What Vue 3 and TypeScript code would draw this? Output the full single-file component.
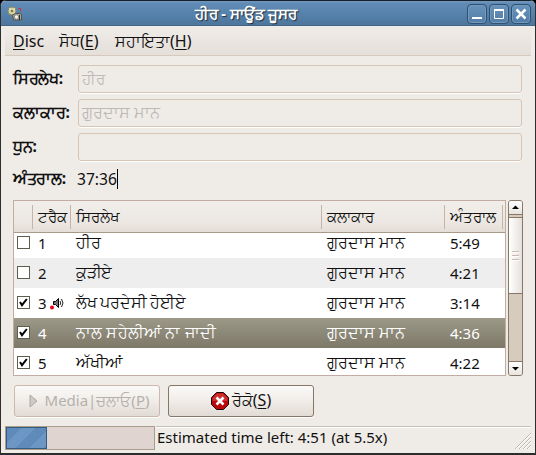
<script setup lang="ts">
import { ref } from 'vue'

interface Track {
  number: number
  title: string
  artist: string
  duration: string
  checked: boolean
  playing?: boolean
  tracking: number
}

const artist = 'ਗੁਰਦਾਸ ਮਾਨ'
const selected = ref(4)
const progress = ref(28)
const tracks = ref<Track[]>([
  { number: 1, title: 'ਹੀਰ', artist, duration: '5:49', checked: false, tracking: -0.2 },
  { number: 2, title: 'ਕੁੜੀਏ', artist, duration: '4:21', checked: false, tracking: -0.3 },
  { number: 3, title: 'ਲੱਖ ਪਰਦੇਸੀ ਹੋਈਏ', artist, duration: '3:14', checked: true, playing: true, tracking: -0.25 },
  { number: 4, title: 'ਨਾਲ ਸਹੇਲੀਆਂ ਨਾ ਜਾਦੀ', artist, duration: '4:36', checked: true, tracking: 0.15 },
  { number: 5, title: 'ਅੱਖੀਆਂ', artist, duration: '4:22', checked: true, tracking: -0.2 },
])
const fields = [
  { label: 'ਸਿਰਲੇਖ:', value: 'ਹੀਰ' },
  { label: 'ਕਲਾਕਾਰ:', value: 'ਗੁਰਦਾਸ ਮਾਨ', wide: true },
  { label: 'ਧੁਨ:', value: '' },
]
</script>

<template>
  <div class="window">
    <header class="titlebar">
      <svg class="app-icon" viewBox="0 0 16 16">
        <circle cx="5" cy="5" r="4" fill="#d5d6a4" stroke="#8d8a63" />
        <path d="M5 5L2.500 2.500M5 5l3-2.500" stroke="#f4f3d0" fill="none" />
        <circle cx="5" cy="5" r="1.300" fill="#77765f" />
        <path d="M5.500 9l3-1.500h4.500l1.500 1v5.500h-8z" fill="#aaa79c" stroke="#55534c" />
        <circle cx="9.500" cy="11" r="2.200" fill="#f2f2f0" stroke="#777" stroke-width=".8" />
        <path d="M12.500 9v5" stroke="#2f3326" />
        <path d="M11 2.500h2.500v3" stroke="#c8393c" fill="none" />
      </svg>
      <h1>ਹੀਰ - ਸਾਊਂਡ ਜੂਸਰ</h1>
      <div class="controls">
        <button><svg viewBox="0 0 20 20"><path d="M5 14h10" stroke="#fff" stroke-width="2" /></svg></button>
        <button><svg viewBox="0 0 20 20"><path d="M5.500 6v8.500h9V6" stroke="#fff" fill="none" /><path d="M5 6h10" stroke="#fff" stroke-width="2" /></svg></button>
        <button><svg viewBox="0 0 20 20"><path d="M5.500 5.500l9 9M14.500 5.500l-9 9" stroke="#fff" stroke-width="2.500" /></svg></button>
      </div>
    </header>

    <nav class="menubar">
      <span class="m1"><u>D</u>isc</span>
      <span class="m2">ਸੋਧ(<u>E</u>)</span>
      <span class="m3">ਸਹਾਇਤਾ(<u>H</u>)</span>
    </nav>

    <main>
      <section class="form">
        <div v-for="f in fields" :key="f.label" class="field">
          <label :class="{ wide: f.wide }">{{ f.label }}</label>
          <div class="entry"><span :class="{ artist: f.wide }">{{ f.value }}</span></div>
        </div>
        <div class="field total">
          <label>ਅੰਤਰਾਲ:</label>
          <span class="time">37:36</span><i class="caret"></i>
        </div>
      </section>

      <section class="list">
        <div class="table">
          <div class="head row">
            <span class="c0"></span>
            <span class="c1">ਟਰੈਕ</span>
            <span class="c2">ਸਿਰਲੇਖ</span>
            <span class="c3">ਕਲਾਕਾਰ</span>
            <span class="c4">ਅੰਤਰਾਲ</span>
          </div>
          <div class="rows">
            <div
              v-for="t in tracks"
              :key="t.number"
              class="row track"
              :class="{ even: t.number % 2 === 0, selected: t.number === selected }"
              @click="selected = t.number"
            >
              <span class="c0">
                <i class="check" @click.stop="t.checked = !t.checked">
                  <svg v-if="t.checked" viewBox="0 0 11 11"><path d="M2 5l2 3.2L8.8 2" stroke="#000" stroke-width="2" fill="none" /></svg>
                </i>
              </span>
              <span class="c1">{{ t.number }}
                <svg v-if="t.playing" class="speaker" viewBox="0 0 14 14">
                  <path d="M3.500 5.500h2l3-3v9l-3-3h-2z" fill="#777" stroke="#000" />
                  <path d="M10 5q1.500 2 0 4M11.500 3q3 4 0 8" stroke="#222" fill="none" />
                  <circle cx="2" cy="11.500" r="2" fill="#f00018" />
                </svg>
              </span>
              <span class="c2" :style="{ letterSpacing: t.tracking + 'px' }">{{ t.title }}</span>
              <span class="c3 artist">{{ t.artist }}</span>
              <span class="c4">{{ t.duration }}</span>
            </div>
          </div>
        </div>
        <div class="scrollbar">
          <div class="step up"><svg viewBox="0 0 13 13"><path d="M3 8h7L6.500 4.500z" /></svg></div>
          <div class="thumb"><i></i><i></i><i></i></div>
          <div class="trough"></div>
          <div class="step down"><svg viewBox="0 0 13 13"><path d="M3 5h7L6.500 8.500z" /></svg></div>
        </div>
      </section>

      <section class="actions">
        <button class="btn disabled">
          <svg class="play" viewBox="0 0 9 14"><path d="M1 1v12l7-6z" fill="#cfcac5" stroke="#aaa6a2" /></svg>
          <span>Media|ਚਲਾਓ(<u>P</u>)</span>
        </button>
        <button class="btn cancel">
          <svg class="stop" viewBox="0 0 18 18">
            <path d="M5.500 .5h7l5 5v7l-5 5h-7l-5-5v-7z" fill="#b9080c" stroke="#1b0808" />
            <path d="M6 1.500h6L16.500 6v3h-15V6z" fill="#d5403f" opacity=".7" />
            <path d="M5.500 5.500l7 7M12.500 5.500l-7 7" stroke="#fff" stroke-width="2.600" />
          </svg>
          <span>ਰੋਕੋ(<u>S</u>)</span>
        </button>
      </section>
    </main>

    <footer class="status">
      <div class="progress"><div class="bar" :style="{ width: progress + '%' }"></div></div>
      <div class="message">
        <span>Estimated time left: 4:51 (at 5.5x)</span>
        <svg class="grip" viewBox="0 0 17 17">
          <path d="M1 17L17 1M5 17L17 5M9 17L17 9M13 17l4-4" stroke="#bdb7b0" />
          <path d="M2 17L17 2M6 17L17 6M10 17l7-7M14 17l3-3" stroke="#fff" />
        </svg>
      </div>
    </footer>
  </div>
</template>

<style>
body { margin: 0; overflow: hidden; background: #000; }
</style>

<style scoped>
* { box-sizing: border-box; }
.window {
  width: 536px;
  height: 455px;
  display: flex;
  flex-direction: column;
  background: #efebe7;
  border: solid #2d2d2d;
  border-width: 0 1px 2px 1px;
  border-radius: 6px 6px 0 0;
  overflow: hidden;
  font: 15px/20px "Noto Sans", "Open Sans", sans-serif;
  color: #111;
  white-space: nowrap;
}
u { text-decoration-thickness: 1px; text-underline-offset: 2px; }
button { font: inherit; color: inherit; padding: 0; }
.titlebar {
  flex: none;
  height: 26px;
  display: grid;
  grid-template-columns: 70px 1fr 114px;
  align-items: center;
  border-top: 1px solid #17202a;
  background: linear-gradient(#7399bf 0, #5f8bb5 10%, #5682ac 50%, #4e769c 95%, #3c5b79);
}
.app-icon { width: 16px; height: 16px; margin-left: 6px; }
h1 { margin: 0; text-align: center; font-size: 14.5px; line-height: 22px; padding-bottom: 2px; color: #fff; text-shadow: 1px 1px 1px #1d2d3d; }
.controls { display: flex; gap: 2px; justify-content: flex-end; padding-right: 4px; }
.controls button { width: 20px; height: 20px; border: 1px solid #2f4f70; border-radius: 4px; background: linear-gradient(#6a93bb, #527da6); box-shadow: inset 0 0 0 1px #7299be; }
.controls svg { display: block; width: 20px; height: 20px; margin: -1px; }
.menubar { flex: none; height: 30px; margin: 0 4px; display: flex; padding: 5px 0 0 8px; border-bottom: 1px solid #d7c9bb; background: linear-gradient(#f0ece8, #e5dfd9); font-size: 16px; }
.m1 { width: 46px; }
.m2 { width: 56px; }
main { padding: 9px 12px 0; }
.form { display: grid; gap: 6px; }
.field { display: flex; height: 28px; align-items: center; }
.field label { width: 65px; font-weight: 700; flex: none; font-size: 15.5px; padding-bottom: 2px; letter-spacing: -.3px; }
.field .wide { letter-spacing: -.1px; }
.entry { flex: none; width: 444px; height: 28px; border: 1px solid #d7c5b5; border-radius: 3px; box-shadow: 0 1px #fff; padding: 2px 3px; color: #bdb9b5; }
.artist { font-size: 15.5px; letter-spacing: .03px; }
.total { height: 20px; margin-top: 2px; }
.time { margin-left: -1px; font-size: 15.6px; }
.caret { width: 1px; height: 20px; background: #000; }
.list { display: flex; gap: 2px; margin-top: 11px; }
.table { width: 493px; height: 176px; border: 1px solid #c2aca3; background: #fff; overflow: hidden; display: flex; flex-direction: column; }
.row { display: grid; grid-template-columns: 19px 38px 251px 123px 1fr; flex: none; }
.head { height: 32px; border-bottom: 1px solid #a89a88; background: linear-gradient(#f1eeea, #ece7e2 70%, #e3ddd6); padding: 4px 0 3px; }
.head span { border-right: 1px solid #c8b3a9; padding: 1px 0 0 5px; }
.head .c4 { margin-right: 2px; }
.rows { margin-top: -5px; clip-path: inset(5px 0 0); }
.track { height: 30px; align-items: center; }
.track .c0 { padding: 0 0 2px 3px; }
.track .c1, .track .c2, .track .c3, .track .c4 { padding-left: 5px; }
.track .c2, .track .c3 { margin-top: -2px; }
.track .c2 { font-size: 15.5px; }
.track .c1 { display: flex; align-items: center; }
.even { background: #eee; }
.selected { background: linear-gradient(#9c9988, #7d7868); color: #fff; }
.check { display: block; width: 13px; height: 13px; border: 1px solid #5e5c4c; background: #fff; }
.check svg { display: block; width: 11px; height: 11px; }
.speaker { width: 14px; height: 14px; margin-left: 3px; }
.scrollbar { width: 15px; height: 176px; display: flex; flex-direction: column; border: 1px solid #87786a; border-radius: 3px; background: #d7cbbe; overflow: hidden; }
.step { height: 14px; flex: none; background: linear-gradient(#fff, #e8e3de); }
.step svg { display: block; width: 13px; height: 13px; }
.up { border-bottom: 1px solid #87786a; }
.down { border-top: 1px solid #87786a; }
.thumb { height: 77px; margin-top: 2px; border: solid #87786a; border-width: 1px 0; background: linear-gradient(90deg, #fff, #e5e0db); display: flex; flex-direction: column; align-items: center; justify-content: center; gap: 2px; }
.thumb i { width: 7px; height: 2px; border-top: 1px solid #cbb9b0; border-bottom: 1px solid #fff; }
.trough { flex: 1; }
.actions { display: flex; gap: 8px; margin: 9px 0 0 1px; }
.btn { width: 146px; height: 32px; display: flex; align-items: center; justify-content: center; border: 1px solid #857668; border-radius: 3px; background: linear-gradient(#fbfaf9, #f0ece8 50%, #e2dbd5); box-shadow: 0 1px #fff; }
.disabled { color: #b5b0ab; border-color: #ccb8ad; padding-left: 4px; }
.cancel { font-size: 16px; }
.play { width: 9px; height: 14px; margin-right: 7px; }
.stop { width: 18px; height: 18px; margin-right: 3px; }
.btn span { margin-top: -2px; }
.status { margin: 9px 4px 0; display: flex; gap: 1px; }
.progress { width: 150px; height: 24px; border: 1px solid #aa9d8c; background: #dfd4cf; }
.bar { height: 22px; border: 1px solid #365b80; background: repeating-linear-gradient(135deg, #5f8bbb 0 10px, #6c97c5 10px 20px); }
.message { flex: 1; display: flex; justify-content: space-between; border-top: 1px solid #c6beb8; box-shadow: inset 0 1px #fff; padding: 1px 0 0 1px; }
.message span { margin-top: -1px; }
.grip { width: 17px; height: 17px; margin-top: 4px; }
</style>
